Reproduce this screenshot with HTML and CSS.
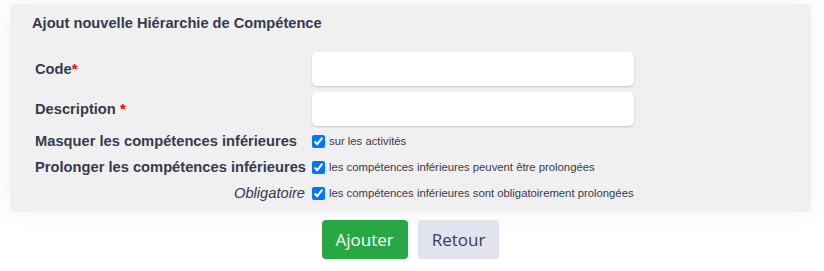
FILE: index.html
```html
<!DOCTYPE html>
<html lang="fr">
<head>
    <meta charset="UTF-8">
    <meta name="viewport" content="width=device-width, initial-scale=1.0">
    <title>Ajout nouvelle Hiérarchie de Compétence</title>
    <link rel="stylesheet" href="styles.css">
</head>
<body>
    <div class="page">
        <form class="panel">
            <h3 class="panel-title">Ajout nouvelle Hiérarchie de Compétence</h3>
            <div class="form-grid">
                <label class="label field-label" for="code">Code<span class="req">*</span></label>
                <input class="input" type="text" id="code">

                <label class="label field-label" for="desc">Description <span class="req">*</span></label>
                <input class="input" type="text" id="desc">

                <div class="label check-label first">Masquer les compétences inférieures</div>
                <label class="check first"><input type="checkbox" checked> <span>sur les activités</span></label>

                <div class="label check-label">Prolonger les compétences inférieures</div>
                <label class="check"><input type="checkbox" checked> <span>les compétences inférieures peuvent être prolongées</span></label>

                <div class="label check-label sub">Obligatoire</div>
                <label class="check"><input type="checkbox" checked> <span>les compétences inférieures sont obligatoirement prolongées</span></label>
            </div>
        </form>
        <div class="buttons">
            <button class="btn btn-primary">Ajouter</button>
            <button class="btn btn-back">Retour</button>
        </div>
    </div>
</body>
</html>
```

FILE: styles.css
```css
body {
    margin: 0;
    background-color: #fff;
    font-family: "Liberation Sans", Arial, sans-serif;
    color: #373a4c;
}

.page {
    width: 801px;
    padding: 4px 0 0 10px;
}

.panel {
    background-color: #f0f0f0;
    border-radius: 6px;
    box-shadow: 0 0 24px rgba(0, 0, 0, 0.06);
    padding: 11px 22px 9px 22px;
    margin: 0;
}

.panel-title {
    margin: 0 0 21px 0;
    font-size: 14.65px;
    font-weight: bold;
    line-height: 16px;
}

.form-grid {
    display: grid;
    grid-template-columns: 277px 322px;
    row-gap: 6px;
    align-items: center;
    padding-left: 3px;
}

.label {
    font-size: 14.7px;
    font-weight: bold;
}

.req {
    color: #f00;
}

.input {
    height: 34px;
    border: none;
    border-radius: 5px;
    background-color: #fff;
    box-shadow: 0 1px 2px rgba(0, 0, 0, 0.18);
    box-sizing: border-box;
    outline: none;
}

.check-label {
    height: 20px;
    line-height: 20px;
}

.first {
    margin-top: -1px;
}

.sub {
    font-weight: normal;
    font-style: italic;
    text-align: right;
    padding-right: 7px;
}

.check {
    display: flex;
    align-items: center;
    font-size: 11.3px;
    white-space: nowrap;
    height: 20px;
}

.check input {
    margin: 0 4px 0 0;
    width: 13px;
    height: 13px;
}

.buttons {
    display: flex;
    justify-content: center;
    gap: 10px;
    margin-top: 8px;
}

.btn {
    font-family: "Open Sans", sans-serif;
    font-size: 17px;
    height: 39px;
    padding: 0 14px;
    border: none;
    border-radius: 4px;
    cursor: pointer;
}

.btn-primary {
    background-color: #28a745;
    color: #fff;
}

.btn-back {
    background-color: #e1e3ee;
    color: #3b3d52;
    box-shadow: 0 1px 2px rgba(0, 0, 0, 0.08);
}
```
